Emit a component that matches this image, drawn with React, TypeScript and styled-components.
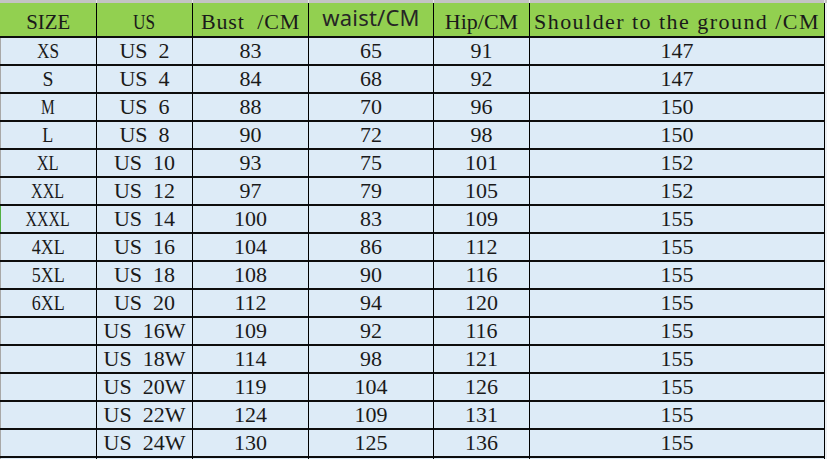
import React from "react";
import styled, { createGlobalStyle } from "styled-components";

const GlobalStyle = createGlobalStyle`
  html, body {
    margin: 0;
    padding: 0;
    background: #eef1f4;
    overflow: hidden;
  }
`;

const COLS = "97px 96px 116px 125px 96px 295px";
const FONT = 22;

// Liberation Serif (Times) advance widths, in em
const W: Record<string, number> = {
  B: 0.667, C: 0.667, E: 0.611, H: 0.722, I: 0.333, L: 0.611, M: 0.889,
  S: 0.556, U: 0.722, W: 0.944, X: 0.722, Z: 0.611,
  a: 0.444, d: 0.5, e: 0.444, g: 0.5, h: 0.5, i: 0.278, l: 0.278, n: 0.5,
  o: 0.5, p: 0.5, r: 0.333, s: 0.389, t: 0.278, u: 0.5,
  " ": 0.25, "/": 0.278,
};

// the sheet draws latin text as half-width monospace: size codes get a
// wide space, letters-only words are squeezed, the rest spread to n * 0.5em
const fitStyle = (text: string): React.CSSProperties => {
  const hasDigit = /\d/.test(text);
  const style: React.CSSProperties = hasDigit ? { wordSpacing: "0.25em" } : {};
  const natural =
    text.split("").reduce((s, c) => s + (c === " " && hasDigit ? 0.5 : W[c] ?? 0.5), 0) * FONT;
  const target = (text.length * FONT) / 2;
  if (natural > target) {
    if (/^[A-Z0-9]+$/.test(text)) style.transform = `scaleX(${Math.max(0.7, target / natural)})`;
    return style;
  }
  style.letterSpacing = `${(target - natural) / text.length}px`;
  return style;
};

const Page = styled.div`
  width: 827px;
  height: 459px;
  overflow: hidden;
`;

const TopStrip = styled.div`
  height: 3px;
  background: #c4c4c4;
  display: grid;
  grid-template-columns: ${COLS};
`;

const StripCell = styled.div`
  border-right: 1px solid #e6e6e6;
`;

const Row = styled.div`
  display: grid;
  grid-template-columns: ${COLS};
`;

const Cell = styled.div<{ $head?: boolean; $edge?: string }>`
  height: ${(p) => (p.$head ? 33 : 26)}px;
  background: ${(p) => (p.$head ? "#92d050" : "#ddebf7")};
  border-right: 1px solid #000;
  border-bottom: 2px solid #0d0d0d;
  display: flex;
  justify-content: center;
  align-items: flex-start;
  white-space: nowrap;
  box-shadow: ${(p) => (p.$edge ? `inset 1px 0 0 ${p.$edge}` : "none")};
`;

const Inner = styled.div<{ $pad: number }>`
  padding-top: ${(p) => p.$pad}px;
  line-height: 26px;
  height: 26px;
`;

const Serif = styled.span`
  display: inline-block;
  font-family: "Liberation Serif", "Times New Roman", serif;
  font-size: ${FONT}px;
  color: #1a1a1a;
  white-space: pre;
  transform-origin: center;
`;

const Sans = styled.span`
  font-family: "Noto Sans", "Open Sans", sans-serif;
  font-size: 22px;
  color: #262626;
  letter-spacing: 0.2px;
`;

const Text: React.FC<{ t: string }> = ({ t }) => <Serif style={fitStyle(t)}>{t}</Serif>;

const header = ["SIZE", "US", "Bust  /CM", "waist/CM", "Hip/CM", "Shoulder to the ground /CM"];

const rows: string[][] = [
  ["XS", "US 2", "83", "65", "91", "147"],
  ["S", "US 4", "84", "68", "92", "147"],
  ["M", "US 6", "88", "70", "96", "150"],
  ["L", "US 8", "90", "72", "98", "150"],
  ["XL", "US 10", "93", "75", "101", "152"],
  ["XXL", "US 12", "97", "79", "105", "152"],
  ["XXXL", "US 14", "100", "83", "109", "155"],
  ["4XL", "US 16", "104", "86", "112", "155"],
  ["5XL", "US 18", "108", "90", "116", "155"],
  ["6XL", "US 20", "112", "94", "120", "155"],
  ["", "US 16W", "109", "92", "116", "155"],
  ["", "US 18W", "114", "98", "121", "155"],
  ["", "US 20W", "119", "104", "126", "155"],
  ["", "US 22W", "124", "109", "131", "155"],
  ["", "US 24W", "130", "125", "136", "155"],
  ["", "", "", "", "", ""],
];

export default function App() {
  return (
    <Page>
      <GlobalStyle />
      <TopStrip>
        {header.map((h) => (
          <StripCell key={h} />
        ))}
      </TopStrip>
      <Row>
        {header.map((h) => (
          <Cell key={h} $head>
            {h === "waist/CM" ? (
              <Inner $pad={1}>
                <Sans>{h}</Sans>
              </Inner>
            ) : (
              <Inner $pad={6}>
                <Text t={h} />
              </Inner>
            )}
          </Cell>
        ))}
      </Row>
      {rows.map((r, i) => (
        <Row key={i}>
          {r.map((v, j) => (
            <Cell key={j} $edge={j === 0 ? (r[0] === "XXXL" ? "#52b043" : "#a8a8a8") : undefined}>
              <Inner $pad={0}>{v && <Text t={v} />}</Inner>
            </Cell>
          ))}
        </Row>
      ))}
    </Page>
  );
}
